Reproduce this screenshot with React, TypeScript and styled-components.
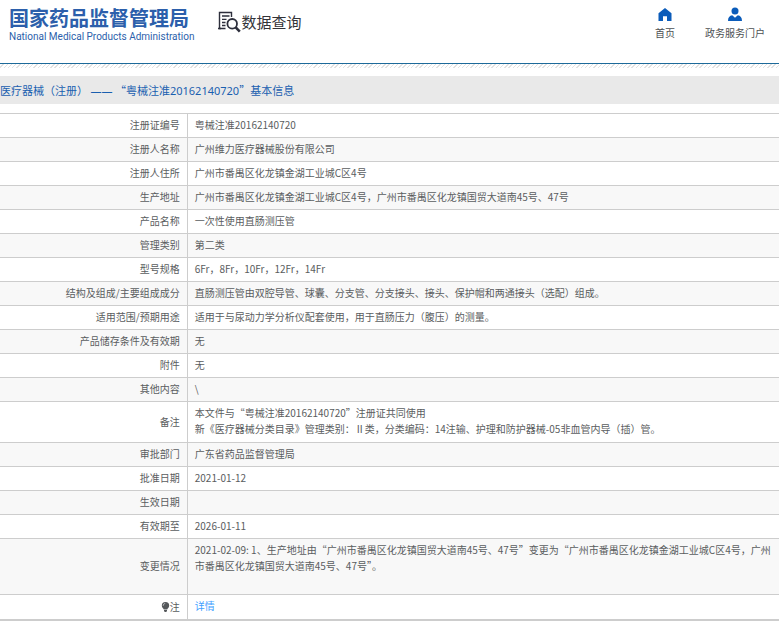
import React from 'react';
import styled, { createGlobalStyle } from 'styled-components';

const GlobalStyle = createGlobalStyle`
  * { box-sizing: border-box; }
  body {
    margin: 0;
    background: #fff;
    color: #5a5d60;
    font: 10px/16px 'Noto Sans CJK SC', sans-serif;
  }
`;

const Header = styled.header`
  display: flex;
  align-items: flex-start;
  height: 63px;
  padding: 5px 14px 0 9px;
`;

const Brand = styled.a`
  display: flex;
  flex-direction: column;
  color: #2c5fab;
  text-decoration: none;
  white-space: nowrap;
`;

const BrandName = styled.span`
  font-size: 20px;
  font-weight: 700;
  line-height: 25px;
`;

const BrandLatin = styled.span`
  font: 400 10px/14px Roboto, sans-serif;
`;

const Search = styled.h1`
  display: flex;
  align-items: center;
  margin: 5px 0 0 24px;
  color: #333338;
  font-size: 15px;
  font-weight: 400;
  line-height: 24px;
  white-space: nowrap;
`;

const Nav = styled.nav`
  display: flex;
  gap: 30px;
  margin-left: auto;
`;

const NavLink = styled.a`
  display: flex;
  flex-direction: column;
  align-items: center;
  gap: 4px;
  padding-top: 2px;
  color: #4c4f52;
  text-decoration: none;
  white-space: nowrap;
`;

const Rule = styled.div`
  height: 5px;
  border-top: 1px solid #1d6a9a;
  background: repeating-linear-gradient(135deg, #fff 0 2px, #e2e2e2 2px 3px) padding-box;
`;

const Title = styled.h2`
  margin: 8px 0 9px;
  padding: 6px 0;
  background: #e9e9e9;
  color: #1a5fb0;
  font-size: 11px;
  font-weight: 400;
  line-height: 16px;
`;

const Latin = styled.span`
  font-family: 'Noto Sans', sans-serif;
  line-height: 12px;
`;

const Table = styled.table`
  width: 100%;
  table-layout: fixed;
  border-collapse: separate;
  border-spacing: 0;
  border-top: 1px solid #cdcdcd;
  border-bottom: 1px solid #cdcdcd;
`;

const Row = styled.tr`
  &:nth-child(even) { background: #f8f8f8; }
`;

const Label = styled.th`
  width: 24.1%;
  padding: 3px 7px 4px 0;
  border-right: 1px solid #cdcdcd;
  border-bottom: 1px solid #cdcdcd;
  font-weight: 400;
  text-align: right;
`;

const Value = styled.td<{ $below?: number }>`
  padding: 3px 0 ${p => p.$below ?? 4}px 7px;
  border-bottom: 1px solid #cdcdcd;
  white-space: pre-line;
`;

const DetailLink = styled.a`
  color: #409eff;
  text-decoration: none;
`;

const Bulb = styled.svg`
  vertical-align: -1px;
`;

type Item = { label: string; value: string; below?: number };

const items: Item[] = [
  { label: '注册证编号', value: '粤械注准20162140720' },
  { label: '注册人名称', value: '广州维力医疗器械股份有限公司' },
  { label: '注册人住所', value: '广州市番禺区化龙镇金湖工业城C区4号' },
  { label: '生产地址', value: '广州市番禺区化龙镇金湖工业城C区4号，广州市番禺区化龙镇国贸大道南45号、47号' },
  { label: '产品名称', value: '一次性使用直肠测压管' },
  { label: '管理类别', value: '第二类' },
  { label: '型号规格', value: '6Fr，8Fr，10Fr，12Fr，14Fr' },
  { label: '结构及组成/主要组成成分', value: '直肠测压管由双腔导管、球囊、分支管、分支接头、接头、保护帽和两通接头（选配）组成。' },
  { label: '适用范围/预期用途', value: '适用于与尿动力学分析仪配套使用，用于直肠压力（腹压）的测量。' },
  { label: '产品储存条件及有效期', value: '无' },
  { label: '附件', value: '无' },
  { label: '其他内容', value: '\\' },
  {
    label: '备注',
    value:
      '本文件与“粤械注准20162140720”注册证共同使用\n新《医疗器械分类目录》管理类别：Ⅱ类，分类编码：14注输、护理和防护器械-05非血管内导（插）管。',
    below: 5,
  },
  { label: '审批部门', value: '广东省药品监督管理局' },
  { label: '批准日期', value: '2021-01-12' },
  { label: '生效日期', value: '' },
  { label: '有效期至', value: '2026-01-11' },
  {
    label: '变更情况',
    value:
      '2021-02-09: 1、生产地址由“广州市番禺区化龙镇国贸大道南45号、47号”变更为“广州市番禺区化龙镇金湖工业城C区4号，广州市番禺区化龙镇国贸大道南45号、47号”。',
    below: 20,
  },
];

const SearchIcon = () => (
  <svg width="23" height="22" viewBox="0 0 23 22" fill="none" stroke="#2d2f3c" aria-hidden="true">
    <path d="M13.5 6V1.5H1.5V17.5H7.5" strokeWidth="1.4" />
    <path d="M0 17.5H3M4 5H11.5M4 8.3H8.5M4 11.5H7.5M4 14.5H7.5" strokeWidth="1.3" />
    <circle cx="14.2" cy="12.8" r="4.8" strokeWidth="1.8" />
    <path d="M17.7 16.3L21.8 20.6" strokeWidth="2.6" />
  </svg>
);

const HomeIcon = () => (
  <svg width="14" height="14" viewBox="0 0 14 14" fill="#0b5cba" aria-hidden="true">
    <path d="M7 1L13.5 6.2V14H9V9.2H5V14H.5V6.2Z" />
  </svg>
);

const PersonIcon = () => (
  <svg width="14" height="14" viewBox="0 0 14 14" fill="#0b5cba" aria-hidden="true">
    <circle cx="7" cy="4" r="3.5" />
    <path d="M0 14C0 10.4 1.6 8.7 4.2 8.3L7 10.8L9.8 8.3C12.4 8.7 14 10.4 14 14Z" />
  </svg>
);

const BulbIcon = () => (
  <Bulb width="9" height="10" viewBox="0 0 9 10" fill="#55585b" aria-hidden="true">
    <path d="M4.5 0A3.7 3.7 0 0 1 8.2 3.7C8.2 5.6 6.4 6.2 6.2 7.6H2.8C2.6 6.2.8 5.6.8 3.7A3.7 3.7 0 0 1 4.5 0ZM3 8.1H6V9.1L5.2 10H3.8L3 9.1Z" />
    <path d="M2.2 3.8C2.2 2.5 3 1.6 4.2 1.5" fill="none" stroke="#fff" strokeWidth=".6" />
  </Bulb>
);

export default function App() {
  return (
    <>
      <GlobalStyle />
      <Header>
        <Brand href="#">
          <BrandName>国家药品监督管理局</BrandName>
          <BrandLatin>National Medical Products Administration</BrandLatin>
        </Brand>
        <Search>
          <SearchIcon />
          数据查询
        </Search>
        <Nav>
          <NavLink href="#">
            <HomeIcon />
            首页
          </NavLink>
          <NavLink href="#">
            <PersonIcon />
            政务服务门户
          </NavLink>
        </Nav>
      </Header>
      <Rule />
      <main>
        <Title>
          医疗器械（注册） <Latin>——</Latin> “粤械注准<Latin>20162140720</Latin>”基本信息
        </Title>
        <Table>
          <tbody>
            {items.map(item => (
              <Row key={item.label}>
                <Label scope="row">{item.label}</Label>
                <Value $below={item.below}>{item.value}</Value>
              </Row>
            ))}
            <Row>
              <Label scope="row">
                <BulbIcon />注
              </Label>
              <Value $below={5}>
                <DetailLink href="#">详情</DetailLink>
              </Value>
            </Row>
          </tbody>
        </Table>
      </main>
    </>
  );
}
